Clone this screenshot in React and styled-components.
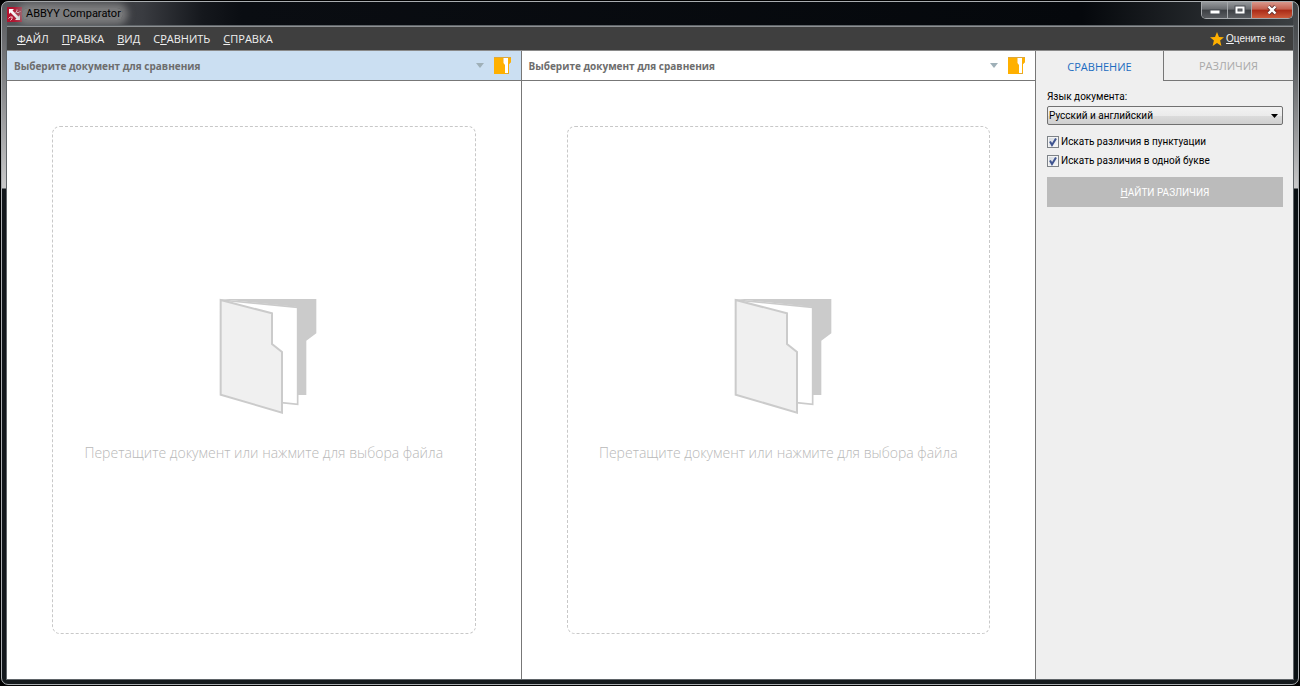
import React, { useState } from "react";
import styled, { createGlobalStyle } from "styled-components";

const MENU = [
  ["", "Ф", "АЙЛ"],
  ["", "П", "РАВКА"],
  ["", "В", "ИД"],
  ["С", "Р", "АВНИТЬ"],
  ["", "С", "ПРАВКА"],
];

export default function App() {
  const [tab, setTab] = useState("compare");

  return (
    <>
      <GlobalStyle />
      <Frame>
        <TitleBar>
          <AppLogo />
          <Title>ABBYY Comparator</Title>
          <WindowButtons>
            <WindowButton aria-label="Свернуть" size="25px">
              <svg width="12" height="10" viewBox="0 0 12 10">
                <rect x="1" y="5" width="10" height="4" fill="#fff" stroke="#4b4f55" />
              </svg>
            </WindowButton>
            <WindowButton aria-label="Развернуть" size="24px">
              <svg width="12" height="10" viewBox="0 0 12 10">
                <rect x="1" y="1" width="10" height="8" fill="#fff" stroke="#4b4f55" />
                <rect x="4" y="4" width="4" height="2" fill="#777" stroke="#4b4f55" />
              </svg>
            </WindowButton>
            <WindowButton aria-label="Закрыть" size="41px" close>
              <svg width="12" height="10" viewBox="0 0 12 10">
                <path d="M2.5 1.5 9.5 8.5M9.5 1.5 2.5 8.5" stroke="#5b2f2f" strokeWidth="4" />
                <path d="M2.5 1.5 9.5 8.5M9.5 1.5 2.5 8.5" stroke="#fff" strokeWidth="2.4" />
              </svg>
            </WindowButton>
          </WindowButtons>
        </TitleBar>
        <Client>
          <MenuBar>
            {MENU.map(([before, key, after]) => (
              <MenuItem key={key + after}>
                {before}
                <u>{key}</u>
                {after}
              </MenuItem>
            ))}
            <RateLink href="#rate">
              <Star />
              <span>
                <u>О</u>цените нас
              </span>
            </RateLink>
          </MenuBar>
          <Workspace>
            <DocumentPane active />
            <DocumentPane />
            <Sidebar>
              <Tabs>
                <Tab active={tab === "compare"} onClick={() => setTab("compare")}>
                  СРАВНЕНИЕ
                </Tab>
                <Tab active={tab === "diff"} onClick={() => setTab("diff")}>
                  РАЗЛИЧИЯ
                </Tab>
              </Tabs>
              <Settings />
            </Sidebar>
          </Workspace>
        </Client>
      </Frame>
    </>
  );
}

function DocumentPane({ active }) {
  return (
    <Pane>
      <PaneHeader active={active}>
        <PaneTitle>Выберите документ для сравнения</PaneTitle>
        <IconButton aria-label="Последние документы">
          <svg width="8" height="5" viewBox="0 0 8 5">
            <path d="M0 0h8L4 5z" fill="#9fb0b8" />
          </svg>
        </IconButton>
        <IconButton aria-label="Открыть документ">
          <svg width="17" height="17" viewBox="0 0 17 17">
            <path d="M0 0h17v5l-2 2v10H0z" fill="#dda83c" />
            <path d="M0 1h9l1 5 2 2v9H0z" fill="#ffb000" />
            <path d="M9.500 1H14v15h-3V8L9.500 6z" fill="#fff" />
            <path d="M14 1h3v4l-2 2v9h-1z" fill="#ffb000" />
          </svg>
        </IconButton>
      </PaneHeader>
      <DropZone>
        <Folder />
        <span>Перетащите документ или нажмите для выбора файла</span>
      </DropZone>
    </Pane>
  );
}

function Settings() {
  return (
    <Form onSubmit={(e) => e.preventDefault()}>
      <FieldLabel htmlFor="language">Язык документа:</FieldLabel>
      <SelectBox>
        <Select id="language" defaultValue="ru-en">
          <option value="ru-en">Русский и английский</option>
        </Select>
        <SelectArrow width="7" height="4" viewBox="0 0 7 4">
          <path d="M0 0h7L3.5 4z" fill="#000" />
        </SelectArrow>
      </SelectBox>
      <Check label="Искать различия в пунктуации" />
      <Check label="Искать различия в одной букве" />
      <SubmitButton>
        <u>Н</u>АЙТИ РАЗЛИЧИЯ
      </SubmitButton>
    </Form>
  );
}

function Check({ label }) {
  return (
    <CheckLabel>
      <CheckInput type="checkbox" defaultChecked />
      <CheckMark width="12" height="12" viewBox="0 0 12 12">
        <path d="M3 5.500 5 9 9 2.500" fill="none" stroke="#3f5490" strokeWidth="2" />
      </CheckMark>
      {label}
    </CheckLabel>
  );
}

function AppLogo() {
  return (
    <svg width="15" height="15" viewBox="0 0 15 15">
      <rect width="15" height="15" fill="#b3132f" />
      <path d="M2 2h5L5.500 3.500l6 6L13 8v5H8l1.500-1.500-6-6L2 7z" fill="#fff" />
      <path
        d="M8.500 5.500 10 4V2.500M9.500 5.500H12L13.500 4M1.500 11.500 3 10h2.500M3.500 13.500 5 12v-2"
        fill="none"
        stroke="#f3c9d0"
      />
    </svg>
  );
}

function Star() {
  return (
    <svg width="14" height="14" viewBox="0 0 14 14">
      <path
        d="M7 0l2 4.900 5 .4-3.900 3.300L11.400 14 7 11.100 2.600 14l1.300-5.400L0 5.300l5-.4z"
        fill="#ffb000"
      />
    </svg>
  );
}

// the back cover sticks out to the right, so the drawing keeps an empty strip on its left
function Folder() {
  return (
    <svg width="107" height="116" viewBox="31 54 321 348">
      <path d="M60 57H350V160L320 182V345H290V80z" fill="#cbcbcb" />
      <path d="M63 60 294 82V373L245 368" fill="#fff" stroke="#cbcbcb" strokeWidth="5" />
      <path
        d="M63 60 217 100V192L247 216V398L63 344z"
        fill="#f0f0f0"
        stroke="#cbcbcb"
        strokeWidth="6"
      />
    </svg>
  );
}

const GlobalStyle = createGlobalStyle`
  body {
    margin: 0;
    background: #000;
    font-family: "Open Sans", "Noto Sans", sans-serif;
  }
  * {
    box-sizing: border-box;
  }
  button, select {
    font-family: inherit;
  }
  svg {
    display: block;
    flex: none;
  }
`;

const Frame = styled.div`
  display: flex;
  flex-direction: column;
  min-height: calc(100vh - 2px);
  margin: 1px;
  padding: 0 5px 5px;
  border: 1px solid #a9adb0;
  border-radius: 7px;
  background:
    linear-gradient(#14191c, #14191c) bottom / 100% 5px no-repeat,
    linear-gradient(#55565a, #77787b 60px, #c9c9ca 186px, #12171b 187px) left / 5px 100% no-repeat,
    linear-gradient(#3c4043, #5b5d60 60px, #c9c9ca 186px, #0a1013 187px) right / 5px 100% no-repeat,
    linear-gradient(90deg, #55565a, #3a3c41 140px, #15181d 200px, #0a0d12 240px, #05080c 1080px, #3c4043);
`;

const TitleBar = styled.div`
  display: flex;
  align-items: center;
  height: 24px;
`;

const Title = styled.span`
  margin-right: auto;
  padding: 0 2px 0 4px;
  border-radius: 8px;
  background: rgba(145, 145, 145, 0.7);
  box-shadow: 0 0 7px 5px rgba(145, 145, 145, 0.7);
  color: #000;
  font-family: Roboto, "Open Sans", sans-serif;
  font-size: 11px;
  line-height: 12px;
`;

const WindowButtons = styled.div`
  display: flex;
  align-self: flex-start;
  height: 17px;
  border: 1px solid #a5a8ab;
  border-top: 0;
  border-radius: 0 0 5px 5px;
  overflow: hidden;
`;

const WindowButton = styled.button.withConfig({
  shouldForwardProp: (prop) => !["close", "size"].includes(prop),
})`
  display: flex;
  align-items: center;
  justify-content: center;
  width: ${({ size }) => size};
  padding: 0;
  border: 0;
  background: ${({ close }) =>
    close
      ? "linear-gradient(#d9988c, #c4604f 45%, #a92a16 50%, #cc5a3a)"
      : "linear-gradient(#96999c, #6a6d71 45%, #3d4044 50%, #5a5d61)"};
  & + & {
    border-left: 1px solid #a5a8ab;
  }
`;

const Client = styled.div`
  display: flex;
  flex: 1;
  flex-direction: column;
  border-top: 1px solid #8e9194;
  box-shadow: 0 0 0 1px #5f6468;
`;

const MenuBar = styled.nav`
  display: flex;
  align-items: center;
  gap: 13px;
  height: 23px;
  padding: 0 8px 0 10px;
  background: #3f3f3f;
`;

const MenuItem = styled.button`
  padding: 0;
  border: 0;
  background: none;
  color: #f0f0f0;
  font-size: 11px;
  line-height: 15px;
`;

const RateLink = styled.a`
  display: flex;
  align-items: center;
  gap: 2px;
  margin-left: auto;
  color: #f5f5f5;
  font-family: "Liberation Sans", Arial, sans-serif;
  font-size: 10px;
  text-decoration: none;
`;

const Workspace = styled.div`
  display: flex;
  flex: 1;
  border-top: 1px solid #8a8a8a;
  background: #fff;
`;

const Pane = styled.section`
  display: flex;
  flex: 1;
  flex-direction: column;
  border-right: 1px solid #777;
`;

const PaneHeader = styled.header.withConfig({
  shouldForwardProp: (prop) => prop !== "active",
})`
  display: flex;
  align-items: center;
  gap: 10px;
  height: 30px;
  padding: 0 10px 0 7px;
  border-bottom: 1px solid #777;
  background: ${({ active }) => (active ? "#cbdff2" : "#fff")};
`;

const PaneTitle = styled.h2`
  flex: 1;
  margin: 0;
  color: #6d6d6d;
  font-size: 10px;
  font-weight: 700;
`;

const IconButton = styled.button`
  padding: 0;
  border: 0;
  background: none;
`;

const DropZone = styled.button`
  display: flex;
  flex: 1;
  flex-direction: column;
  align-items: center;
  justify-content: center;
  gap: 29px;
  margin: 45px;
  border: 1px dashed #c8c8c8;
  border-radius: 8px;
  background: none;
  color: #b8b8b8;
  font-size: 14px;
  font-weight: 300;
  line-height: 20px;
`;

const Sidebar = styled.aside`
  width: 257px;
  background: #efefef;
`;

const Tabs = styled.div`
  display: grid;
  grid-template-columns: 127px 1fr;
  height: 30px;
`;

const Tab = styled.button.withConfig({
  shouldForwardProp: (prop) => prop !== "active",
})`
  padding: 0;
  border: 0 solid #777;
  border-bottom-width: ${({ active }) => (active ? "0" : "1px")};
  background: none;
  color: ${({ active }) => (active ? "#1c6cc0" : "#a9a9a9")};
  font-size: 11px;
  & + & {
    border-left-width: 1px;
  }
`;

const Form = styled.form`
  display: flex;
  flex-direction: column;
  padding: 8px 10px 0 11px;
  font-family: Roboto, "Open Sans", sans-serif;
  font-size: 10px;
`;

const FieldLabel = styled.label`
  line-height: 16px;
  margin-bottom: 1px;
`;

const SelectBox = styled.div`
  position: relative;
  margin-bottom: 7px;
`;

const Select = styled.select`
  appearance: none;
  display: block;
  width: 100%;
  height: 19px;
  padding: 0 18px 0 1px;
  border: 1px solid #707070;
  border-radius: 2px;
  background: linear-gradient(#f2f2f2, #ebebeb 50%, #dcdcdc 51%, #cfcfcf);
  color: #000;
  font-size: 10px;
`;

const SelectArrow = styled.svg`
  position: absolute;
  top: 8px;
  right: 5px;
  pointer-events: none;
`;

const CheckLabel = styled.label`
  display: grid;
  grid-template-columns: 12px 1fr;
  align-items: center;
  gap: 2px;
  height: 19px;
`;

const CheckMark = styled.svg`
  grid-area: 1 / 1;
  pointer-events: none;
`;

const CheckInput = styled.input`
  appearance: none;
  grid-area: 1 / 1;
  width: 12px;
  height: 12px;
  margin: 0;
  border: 1px solid #7d8287;
  background: linear-gradient(135deg, #cfd5dd, #fafafa);
  box-shadow: inset 0 0 0 1px #f4f4f4;
  &:not(:checked) + ${CheckMark} {
    visibility: hidden;
  }
`;

const SubmitButton = styled.button`
  height: 30px;
  margin-top: 7px;
  padding: 0;
  border: 0;
  background: #bbb;
  color: #fff;
  font-size: 10px;
`;
